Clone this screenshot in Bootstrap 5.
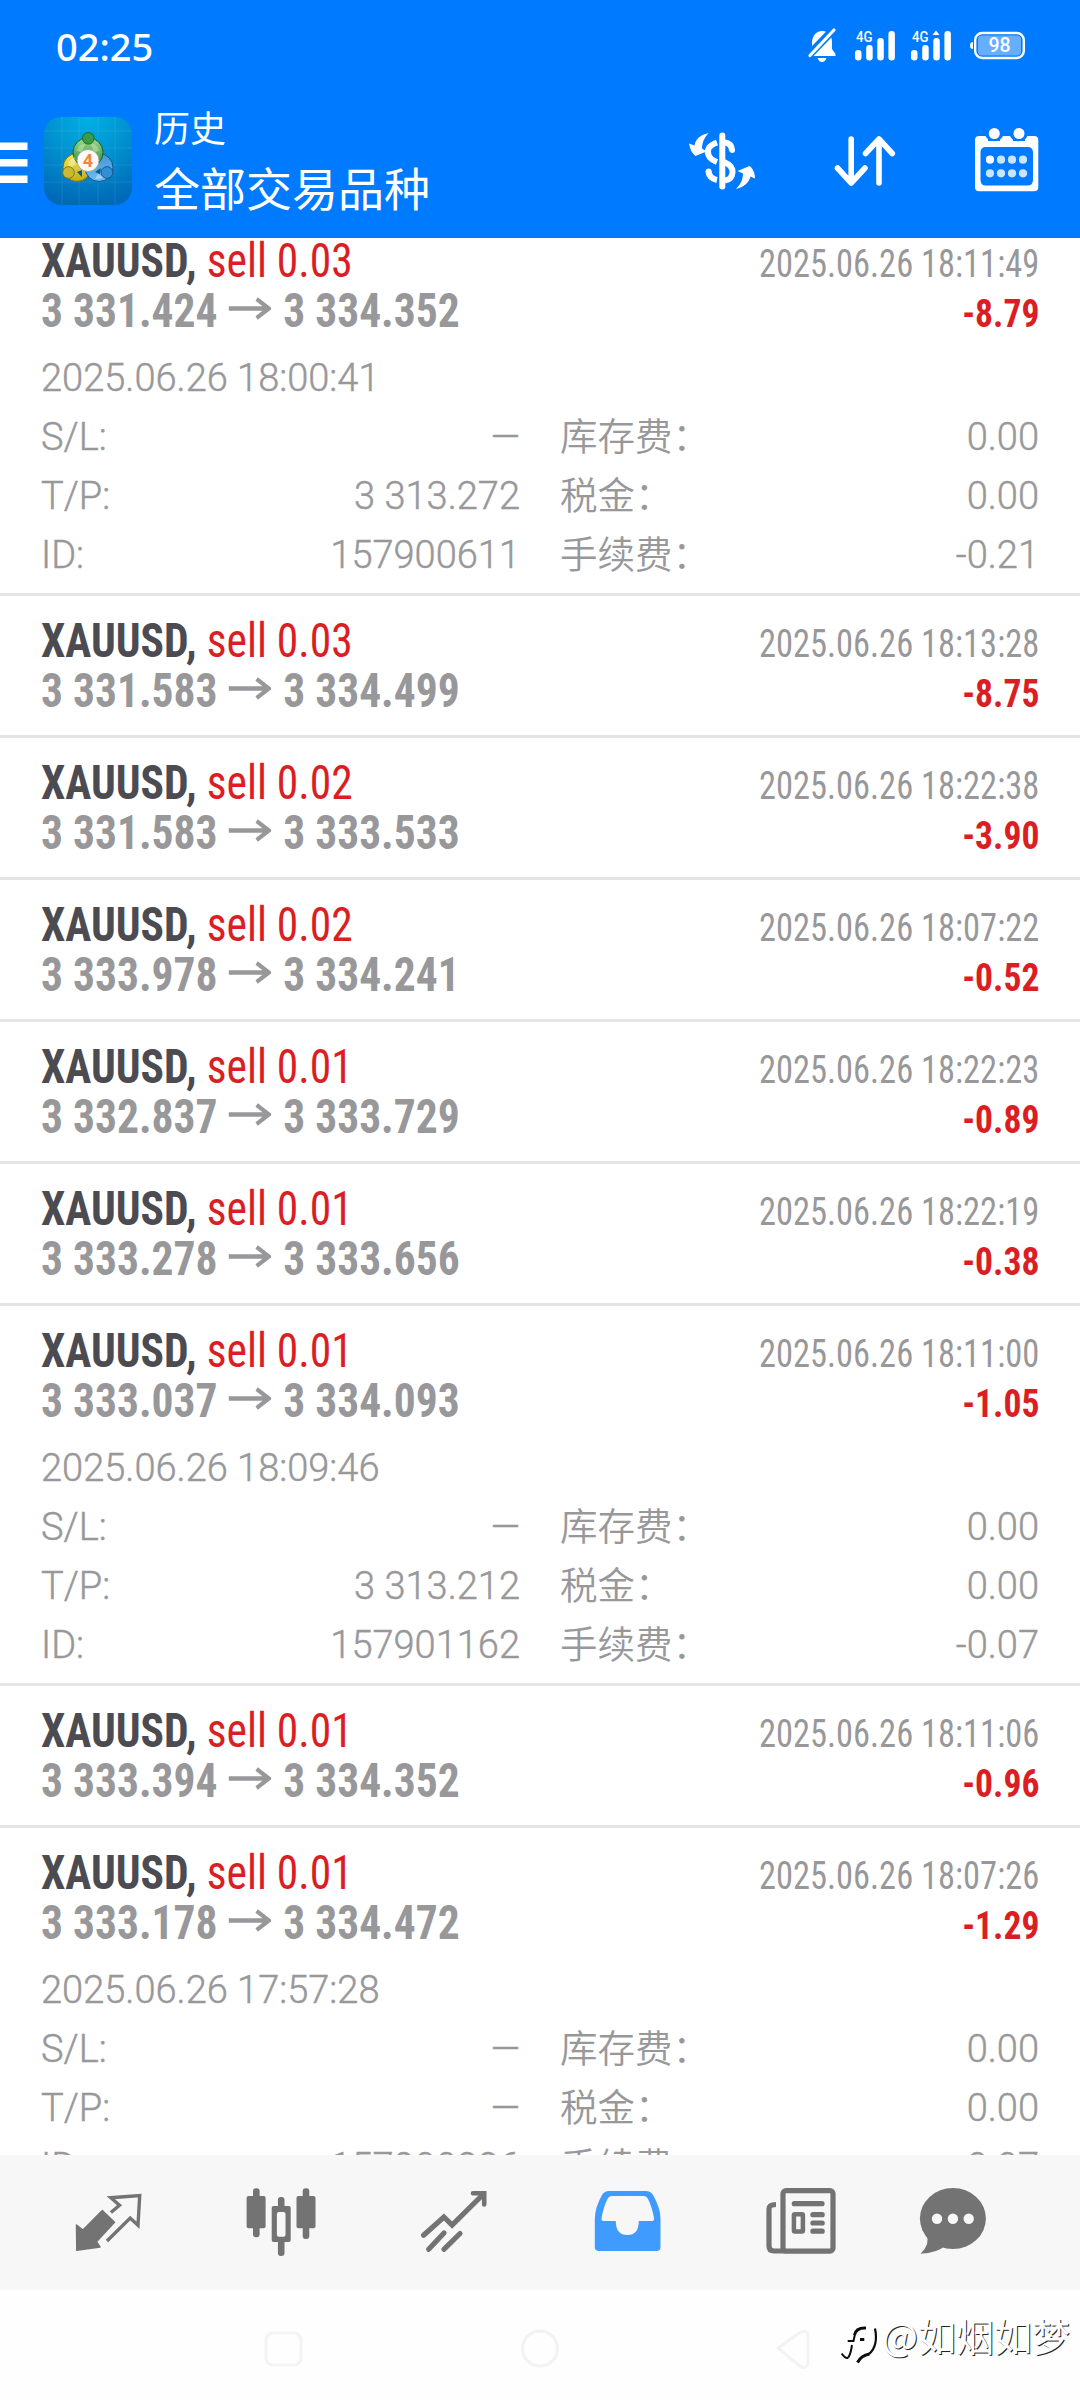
<!DOCTYPE html>
<html lang="zh-CN">
<head>
<meta charset="utf-8">
<meta name="viewport" content="width=device-width, initial-scale=1">
<title>历史</title>
<link rel="stylesheet" href="https://cdn.jsdelivr.net/npm/bootstrap@5.3.0/dist/css/bootstrap.min.css">
<style>
  body{font-family:Roboto,"Noto Sans CJK SC",sans-serif;font-size:37.5px;color:#98989b;background:#fff;}
  .phone{width:1080px;height:2400px;}
  .topbar{height:238px;background:#007aff;color:#fff;}
  .status{height:92px;padding-left:56px;}
  .clock{font:500 38px/92px "Noto Sans",sans-serif;}
  .titlebar{height:146px;}
  .titles{padding-top:10px;}
  .ttl-s{font:400 36px/48px "Noto Sans CJK SC",sans-serif;}
  .ttl-l{font:400 46px/64px "Noto Sans CJK SC",sans-serif;margin-top:4px;}
  .deals{height:1917px;}
  .deals-scroll{margin-top:-22px;}
  .deal{padding:20px 41px 0;height:142px;border-bottom:3px solid #e5e5e5;}
  .deal.open{height:380px;}
  .cnd{font-family:"Roboto Condensed",Roboto,sans-serif;font-stretch:75%;}
  .ln{height:50px;line-height:50px;}
  .sym,.px{transform-origin:0 50%;transform:scaleX(.906);}
  .tm,.pl{transform-origin:100% 50%;}
  .sym{font-size:48px;font-weight:700;color:#4b4b51;}
  .side{font-weight:400;color:#db1e23;}
  .px{font-size:48px;font-weight:700;}
  .px svg{width:47.5px;height:24px;margin:0 13px 10px 12px;}
  .tm{font-size:38.5px;transform:scaleX(.895);}
  .pl{font-size:38.5px;font-weight:700;color:#db1e23;transform:scaleX(.925);}
  .more{padding-top:13px;line-height:59px;font-size:38px;font-weight:350;-webkit-text-stroke:.45px #98989b;}
  .more .cell{width:479px;height:59px;}
  .zh{font-size:37.5px;-webkit-text-stroke:0;}
  .tabs{height:135px;background:#f7f7f7;padding-left:22px;}
  .sysnav{height:110px;background:#fefefe;}
  .wm{right:10px;bottom:38px;font:400 38px/54px "Noto Sans CJK SC",sans-serif;color:#fff;text-shadow:1px 1px 0 #222;}
</style>
</head>
<body>
<div class="phone d-flex flex-column overflow-hidden position-relative">
  <header class="topbar flex-shrink-0">
    <div class="status d-flex justify-content-between">
      <span class="clock">02:25</span>
      <svg width="280" height="92" viewBox="800 0 280 92" fill="#fff">
        <path d="M812 47V43C812 35 817 31 822 31C829 31 832 36 832 42V49L835.500 54V56H808.500V54Z"/>
        <path d="M817.500 58H826.500Q825 62 822 62T817.500 58Z"/>
        <path d="M808 56L835 28" stroke="#007aff" stroke-width="8"/>
        <path d="M810 55.500L834 30" stroke="#fff" stroke-width="3.200" stroke-linecap="round"/>
        <g id="sig"><rect x="855" y="50" width="6.500" height="10.500" rx="3.200"/><rect x="866.200" y="45" width="6.500" height="15.500" rx="3.200"/><rect x="877.300" y="38" width="6.500" height="22.500" rx="3.200"/><rect x="888.400" y="31" width="6.500" height="29.500" rx="3.200"/>
        <text x="856" y="42" font-family="Roboto" font-size="15.500" font-weight="500" textLength="16.500" lengthAdjust="spacingAndGlyphs">4G</text></g>
        <use href="#sig" x="56"/>
        <path d="M932.500 35L936 30.500L939.500 35Z"/>
        <rect x="975.200" y="33" width="48.600" height="25" rx="7" fill="none" stroke="#fff" stroke-width="2.400"/>
        <rect x="978" y="35.500" width="43" height="20" rx="4" fill="#66aeff"/>
        <path d="M973 42V49Q970 49 970 45.500T973 42Z"/>
        <text x="999.500" y="52" text-anchor="middle" font-family="Roboto" font-size="19.500" font-weight="500">98</text>
      </svg>
    </div>
    <div class="titlebar d-flex">
      <svg class="flex-shrink-0" width="154" height="146" viewBox="0 92 154 146">
        <defs>
          <radialGradient id="bg" cx=".5" cy="0" r="1"><stop offset="0" stop-color="#00b1e6"/><stop offset=".55" stop-color="#008ccc"/><stop offset="1" stop-color="#0069b8"/></radialGradient>
          <linearGradient id="gr" x2="0" y2="1"><stop stop-color="#a5dc8c"/><stop offset="1" stop-color="#1c8636"/></linearGradient>
          <linearGradient id="ye" x2="0" y2="1"><stop stop-color="#f8ec50"/><stop offset="1" stop-color="#c2ab1c"/></linearGradient>
          <linearGradient id="bl" x2="0" y2="1"><stop stop-color="#3f96dc"/><stop offset="1" stop-color="#6fbcf0"/></linearGradient>
        </defs>
        <path d="M0 142.500H27.500V150H0ZM0 159H27.500V166.500H0ZM0 175.500H27.500V183H0Z" fill="#fff"/>
        <rect x="44" y="117" width="88" height="88" rx="17" fill="url(#bg)"/>
        <path d="M62 117V205M79 117V205M98 117V205M115 117V205M44 131H132M44 148H132M44 165H132M44 182H132" stroke="#fff" stroke-opacity=".09"/>
        <circle cx="77" cy="167.500" r="14" fill="url(#ye)" stroke="#776f18"/>
        <circle cx="99" cy="167.500" r="14" fill="url(#bl)" stroke="#14538c"/>
        <circle cx="88" cy="152.500" r="15" fill="url(#gr)" stroke="#145c2c"/>
        <path d="M77 151Q79 143 85 144L82 152ZM99 151Q97 143 91 144L94 152Z" fill="#d6f0c0" fill-opacity=".45"/>
        <path d="M68 166Q69 159 75 157L76 163L71 168ZM98 174L104 178L95 179Z" fill="#fff" fill-opacity=".4"/>
        <path d="M77 172L82 170L82 177ZM95 172L101 168L100 174Z" fill="#0d5790"/>
        <circle cx="88.300" cy="138.300" r="5.800" fill="#3d9a45" stroke="#176b2d"/>
        <circle cx="68.500" cy="172.500" r="5.800" fill="#c9b933" stroke="#7c7815"/>
        <circle cx="107" cy="172.500" r="5.800" fill="#3190d4" stroke="#13588f"/>
        <circle cx="88" cy="160.500" r="11" fill="#fafaf8" stroke="#a5a79b"/>
        <text x="88" y="167" text-anchor="middle" font-family="Roboto" font-size="18" font-weight="700" fill="#f2853d">4</text>
      </svg>
      <div class="flex-grow-1 titles">
        <div class="ttl-s">历史</div>
        <div class="ttl-l">全部交易品种</div>
      </div>
      <svg class="flex-shrink-0" width="410" height="146" viewBox="670 92 410 146">
        <g fill="none" stroke="#fff" stroke-width="6">
          <path d="M722.300 135.500V186.500" stroke-linecap="round"/>
          <path d="M717 142.500C710 145 706 149 708.500 155C710 159 713 160.500 717 162" />
          <path d="M725 142.500C729 143 731.500 145.500 732 150" stroke-linecap="round"/>
          <path d="M724 162C730 164.500 733 167.500 732.500 172.500C732 178 729 180 725 180.500" />
          <path d="M717 180C712 179 709 176.500 708.500 171.500"/>
        </g>
        <circle cx="708.600" cy="171.500" r="3" fill="#fff"/>
        <path d="M708.500 133C699 135 695.500 140 694.500 145.500L689 143.500C690 149 692 153.500 695.500 156L706.500 151.500L702 148.500C702 143 704 138 708.500 133Z" fill="#fff"/>
        <path d="M736 189C745 187 749 182 750.500 176.500L755 178.500C755 173 753 168.500 749.500 166L737.500 171L743 173.500C743 179 741 184 736 189Z" fill="#fff"/>
        <path d="M851.200 139V183M837.500 168L851.200 183L865 168M879 183V139M865.500 153.500L879 139L892.300 153.500" fill="none" stroke="#fff" stroke-width="5.600" stroke-linecap="round" stroke-linejoin="round"/>
        <path fill-rule="evenodd" fill="#fff" d="M979 136H985.500A9.500 8.500 0 0 0 1003 136H1010A9.500 8.500 0 0 0 1027.500 136H1034Q1038.300 136 1038.300 140V187Q1038.300 191.300 1034 191.300H979Q975 191.300 975 187V140Q975 136 979 136ZM986 147Q980.500 147 980.500 152.500V180Q980.500 185.500 986 185.500H1027.500Q1033 185.500 1033 180V152.500Q1033 147 1027.500 147Z"/>
        <path d="M988 136V141H1000V136ZM1013 136V141H1025V136Z" fill="#007aff"/>
        <circle cx="994.300" cy="133.500" r="5.500" fill="#fff"/><circle cx="1019" cy="133.500" r="5.500" fill="#fff"/>
        <g fill="#cce4ff"><circle cx="990" cy="159.700" r="4.100" fill="#fff"/><circle cx="1001" cy="159.700" r="4.100"/><circle cx="1012" cy="159.700" r="4.100"/><circle cx="1023" cy="159.700" r="4.100"/><circle cx="990" cy="173.300" r="4.100"/><circle cx="1001" cy="173.300" r="4.100"/><circle cx="1012" cy="173.300" r="4.100"/><circle cx="1023" cy="173.300" r="4.100"/></g>
      </svg>
    </div>
  </header>

  <svg class="d-none"><symbol id="arr" viewBox="0 0 47.5 24" preserveAspectRatio="none"><path d="M0 11.500H45M31 2L44.500 11.500L31 21" fill="none" stroke="#98989b" stroke-width="4.500"/></symbol></svg>

  <main class="deals flex-shrink-0 overflow-hidden">
    <div class="deals-scroll">
      <section class="deal open">
        <div class="ln d-flex justify-content-between align-items-baseline cnd"><span class="sym">XAUUSD, <span class="side">sell 0.03</span></span><span class="tm">2025.06.26 18:11:49</span></div>
        <div class="ln d-flex justify-content-between align-items-baseline cnd"><span class="px">3 331.424<svg><use href="#arr"/></svg>3 334.352</span><span class="pl">-8.79</span></div>
        <div class="more"><div>2025.06.26 18:00:41</div>
          <div class="d-flex justify-content-between"><div class="cell d-flex justify-content-between"><span>S/L:</span><span>—</span></div><div class="cell d-flex justify-content-between"><span class="zh">库存费：</span><span>0.00</span></div></div>
          <div class="d-flex justify-content-between"><div class="cell d-flex justify-content-between"><span>T/P:</span><span>3 313.272</span></div><div class="cell d-flex justify-content-between"><span class="zh">税金：</span><span>0.00</span></div></div>
          <div class="d-flex justify-content-between"><div class="cell d-flex justify-content-between"><span>ID:</span><span>157900611</span></div><div class="cell d-flex justify-content-between"><span class="zh">手续费：</span><span>-0.21</span></div></div>
        </div>
      </section>
      <section class="deal">
        <div class="ln d-flex justify-content-between align-items-baseline cnd"><span class="sym">XAUUSD, <span class="side">sell 0.03</span></span><span class="tm">2025.06.26 18:13:28</span></div>
        <div class="ln d-flex justify-content-between align-items-baseline cnd"><span class="px">3 331.583<svg><use href="#arr"/></svg>3 334.499</span><span class="pl">-8.75</span></div>
      </section>
      <section class="deal">
        <div class="ln d-flex justify-content-between align-items-baseline cnd"><span class="sym">XAUUSD, <span class="side">sell 0.02</span></span><span class="tm">2025.06.26 18:22:38</span></div>
        <div class="ln d-flex justify-content-between align-items-baseline cnd"><span class="px">3 331.583<svg><use href="#arr"/></svg>3 333.533</span><span class="pl">-3.90</span></div>
      </section>
      <section class="deal">
        <div class="ln d-flex justify-content-between align-items-baseline cnd"><span class="sym">XAUUSD, <span class="side">sell 0.02</span></span><span class="tm">2025.06.26 18:07:22</span></div>
        <div class="ln d-flex justify-content-between align-items-baseline cnd"><span class="px">3 333.978<svg><use href="#arr"/></svg>3 334.241</span><span class="pl">-0.52</span></div>
      </section>
      <section class="deal">
        <div class="ln d-flex justify-content-between align-items-baseline cnd"><span class="sym">XAUUSD, <span class="side">sell 0.01</span></span><span class="tm">2025.06.26 18:22:23</span></div>
        <div class="ln d-flex justify-content-between align-items-baseline cnd"><span class="px">3 332.837<svg><use href="#arr"/></svg>3 333.729</span><span class="pl">-0.89</span></div>
      </section>
      <section class="deal">
        <div class="ln d-flex justify-content-between align-items-baseline cnd"><span class="sym">XAUUSD, <span class="side">sell 0.01</span></span><span class="tm">2025.06.26 18:22:19</span></div>
        <div class="ln d-flex justify-content-between align-items-baseline cnd"><span class="px">3 333.278<svg><use href="#arr"/></svg>3 333.656</span><span class="pl">-0.38</span></div>
      </section>
      <section class="deal open">
        <div class="ln d-flex justify-content-between align-items-baseline cnd"><span class="sym">XAUUSD, <span class="side">sell 0.01</span></span><span class="tm">2025.06.26 18:11:00</span></div>
        <div class="ln d-flex justify-content-between align-items-baseline cnd"><span class="px">3 333.037<svg><use href="#arr"/></svg>3 334.093</span><span class="pl">-1.05</span></div>
        <div class="more"><div>2025.06.26 18:09:46</div>
          <div class="d-flex justify-content-between"><div class="cell d-flex justify-content-between"><span>S/L:</span><span>—</span></div><div class="cell d-flex justify-content-between"><span class="zh">库存费：</span><span>0.00</span></div></div>
          <div class="d-flex justify-content-between"><div class="cell d-flex justify-content-between"><span>T/P:</span><span>3 313.212</span></div><div class="cell d-flex justify-content-between"><span class="zh">税金：</span><span>0.00</span></div></div>
          <div class="d-flex justify-content-between"><div class="cell d-flex justify-content-between"><span>ID:</span><span>157901162</span></div><div class="cell d-flex justify-content-between"><span class="zh">手续费：</span><span>-0.07</span></div></div>
        </div>
      </section>
      <section class="deal">
        <div class="ln d-flex justify-content-between align-items-baseline cnd"><span class="sym">XAUUSD, <span class="side">sell 0.01</span></span><span class="tm">2025.06.26 18:11:06</span></div>
        <div class="ln d-flex justify-content-between align-items-baseline cnd"><span class="px">3 333.394<svg><use href="#arr"/></svg>3 334.352</span><span class="pl">-0.96</span></div>
      </section>
      <section class="deal open">
        <div class="ln d-flex justify-content-between align-items-baseline cnd"><span class="sym">XAUUSD, <span class="side">sell 0.01</span></span><span class="tm">2025.06.26 18:07:26</span></div>
        <div class="ln d-flex justify-content-between align-items-baseline cnd"><span class="px">3 333.178<svg><use href="#arr"/></svg>3 334.472</span><span class="pl">-1.29</span></div>
        <div class="more"><div>2025.06.26 17:57:28</div>
          <div class="d-flex justify-content-between"><div class="cell d-flex justify-content-between"><span>S/L:</span><span>—</span></div><div class="cell d-flex justify-content-between"><span class="zh">库存费：</span><span>0.00</span></div></div>
          <div class="d-flex justify-content-between"><div class="cell d-flex justify-content-between"><span>T/P:</span><span>—</span></div><div class="cell d-flex justify-content-between"><span class="zh">税金：</span><span>0.00</span></div></div>
          <div class="d-flex justify-content-between"><div class="cell d-flex justify-content-between"><span>ID:</span><span>157900226</span></div><div class="cell d-flex justify-content-between"><span class="zh">手续费：</span><span>-0.07</span></div></div>
        </div>
      </section>
    </div>
  </main>

  <nav class="tabs d-flex flex-shrink-0">
    <svg width="173" height="135" viewBox="22 2155 173 135">
      <path d="M76.500 2225L83 2230L102.300 2210.500L114.500 2222.300L96.400 2241.700L100 2247L76.800 2250.300Z" fill="#737373" stroke="#737373" stroke-width="1.500" stroke-linejoin="round"/>
      <path d="M110.900 2212.500L119.500 2205.300L110.800 2197.700L139.700 2195.500L138 2225.300L130.200 2218L107 2241" fill="none" stroke="#737373" stroke-width="3.400"/>
    </svg>
    <svg width="173" height="135" viewBox="195 2155 173 135" fill="#737373">
      <rect x="246.600" y="2196" width="19" height="32.300" rx="2"/><rect x="253" y="2188.300" width="6.600" height="49" rx="3"/>
      <rect x="296.500" y="2196" width="19" height="32.300" rx="2"/><rect x="302.700" y="2188.300" width="6.600" height="50.700" rx="3"/>
      <rect x="277.900" y="2197" width="6.600" height="59" rx="3"/><rect x="271.700" y="2206" width="19" height="36" rx="2"/>
      <rect x="276.900" y="2212" width="8.600" height="24.700" rx="2" fill="#f7f7f7"/>
    </svg>
    <svg width="173" height="135" viewBox="368 2155 173 135" fill="none" stroke="#737373" stroke-width="5.200" stroke-linecap="round">
      <path d="M423.600 2235.300L443.900 2217L452.100 2225L483.500 2194"/><path d="M473 2193.300H484.200V2204.500" stroke-width="4.600"/>
      <path d="M444 2233L428.700 2249.300M460 2233.500L443.900 2249.300"/>
    </svg>
    <svg width="173" height="135" viewBox="541 2155 173 135">
      <path d="M609 2191H646Q650.500 2191 653 2195Q660.500 2208 660.500 2219V2247Q660.500 2251 656.500 2251H599Q594.800 2251 594.800 2247V2219Q594.800 2208 602 2195Q604.500 2191 609 2191Z" fill="#409bff"/>
      <path d="M612 2196H643.500Q646.500 2196 648 2199Q652 2207 654 2218Q654.500 2221 652 2221H638.800Q638.800 2235 627.300 2235T615.800 2221H603.500Q601 2221 601.500 2218Q603.500 2207 607.500 2199Q609 2196 612 2196Z" fill="#f7f7f7"/>
    </svg>
    <svg width="173" height="135" viewBox="714 2155 173 135" fill="none" stroke="#737373" stroke-width="5.200">
      <rect x="783" y="2190.600" width="50" height="60.500" rx="3"/>
      <path d="M776 2204.500Q769 2204.500 769 2209V2246Q769 2251 774 2251H786"/>
      <path d="M794.300 2203.700H822M812.900 2214.700H822.200M812.900 2223H822.200M812.900 2231.200H822.200" stroke-linecap="round"/>
      <rect x="793.900" y="2214.200" width="9" height="17.300" rx="1" stroke-width="4.500"/>
    </svg>
    <svg width="173" height="135" viewBox="887 2155 173 135" fill="#737373">
      <ellipse cx="952.900" cy="2218.500" rx="33" ry="30.500"/><path d="M926 2234Q931 2244 920.500 2253.700Q937 2253 945 2246Z"/>
      <g fill="#f7f7f7"><circle cx="937" cy="2218.700" r="5.200"/><circle cx="952.900" cy="2218.700" r="5.200"/><circle cx="968.700" cy="2218.700" r="5.200"/></g>
    </svg>
  </nav>

  <footer class="sysnav flex-shrink-0">
    <svg width="1080" height="110" viewBox="0 2290 1080 110" fill="none">
      <g stroke="#f3f3f3" stroke-width="3"><rect x="266" y="2333" width="35" height="32" rx="7"/><circle cx="540" cy="2348.500" r="17.500"/><path d="M778 2348L801 2332Q808 2330 808 2336V2363Q807 2369 801 2367Z" stroke-linejoin="round"/></g>
      <g stroke="#0c0c0c"><path d="M841.700 2353.500Q845 2358.500 847.500 2358Q850.500 2356 852 2345M847.700 2341H853.500L855 2334" stroke-width="2"/><path d="M854.500 2335Q856 2327.500 866 2328M860 2339.500H864.300M869.500 2354Q861 2355.500 857.500 2362.500" stroke-width="3"/><path d="M875 2328.500Q878.500 2346 869 2354" stroke-width="2.200"/></g>
    </svg>
  </footer>
  <div class="wm position-absolute">@如烟如梦</div>
</div>
<script src="https://cdn.jsdelivr.net/npm/bootstrap@5.3.0/dist/js/bootstrap.bundle.min.js"></script>
</body>
</html>
